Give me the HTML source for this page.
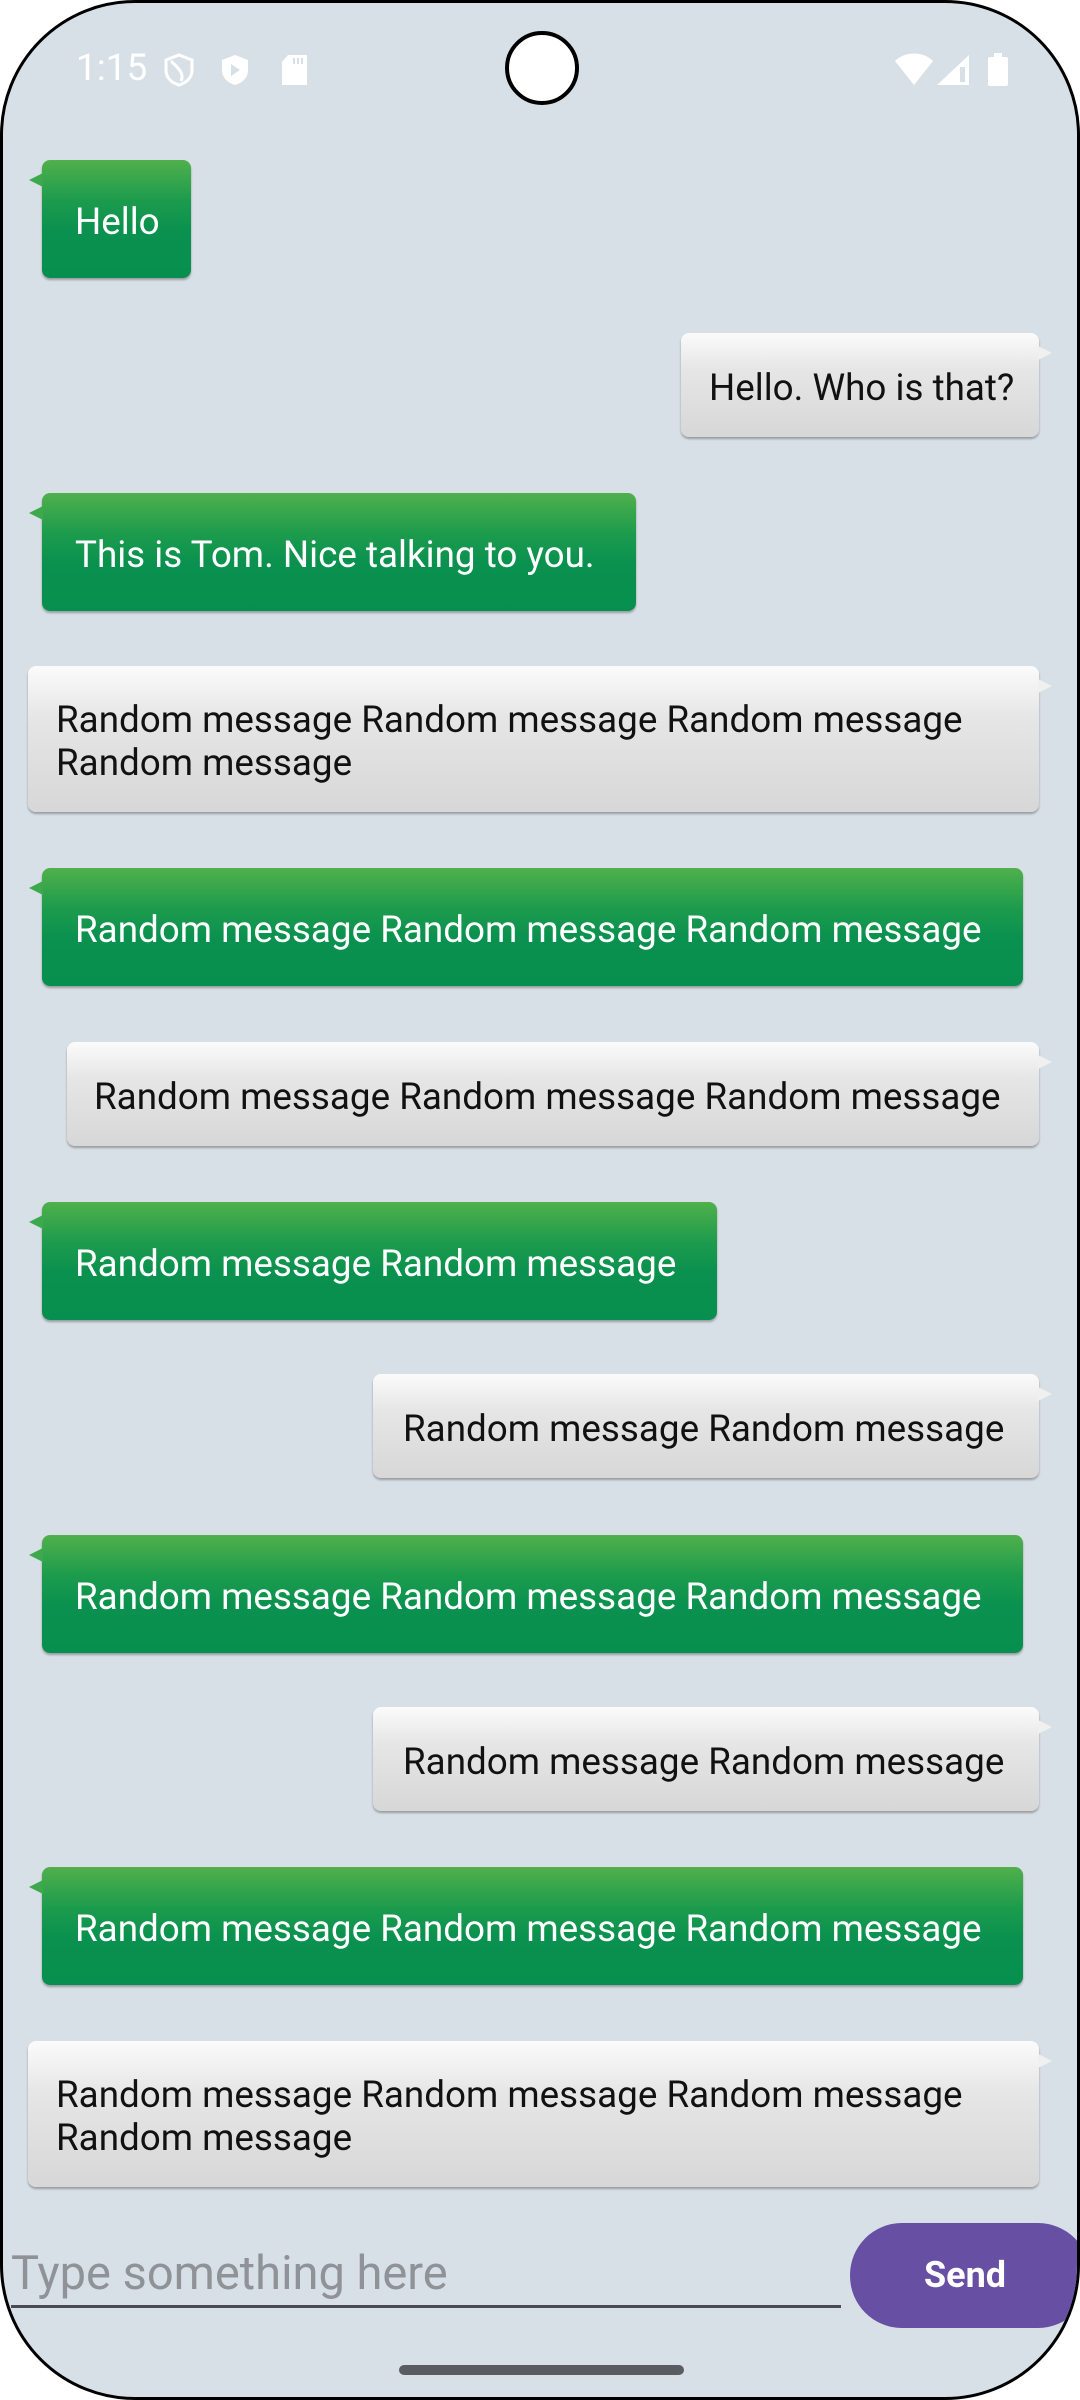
<!DOCTYPE html>
<html><head><meta charset="utf-8"><style>
*{margin:0;padding:0;box-sizing:border-box}
html,body{width:1080px;height:2400px;background:#fff;overflow:hidden}
#f{position:absolute;left:0;top:0;width:1080px;height:2400px;background:#d8e0e7;border:3px solid #000;border-radius:135px;overflow:hidden}
.b{position:absolute;font-family:"Roboto","Liberation Sans",sans-serif;font-size:36.8px;line-height:43px;display:flex;align-items:center;border-radius:8px;padding-top:4px}
.g{background:linear-gradient(#50b04c 0%,#1c9b4d 35%,#0a914f 60%,#078f4f 100%);color:#fff;padding-left:33px;box-shadow:0 2px 2px rgba(0,0,0,.3)}
.g:before{content:"";position:absolute;left:-13px;top:13px;border-right:14px solid #3ea84d;border-top:7px solid transparent;border-bottom:7px solid transparent}
.y{background:linear-gradient(#fbfbfb 0%,#e6e6e6 35%,#d7d7d7 100%);color:#111;padding-left:28px;box-shadow:0 2px 2px rgba(0,0,0,.3)}
.y:after{content:"";position:absolute;right:-13px;top:13px;border-left:14px solid #f0f0f0;border-top:7px solid transparent;border-bottom:7px solid transparent}
.st{position:absolute;color:#fff;font-family:"Roboto","Liberation Sans",sans-serif}
</style></head><body><div id="f">
<div class="st" style="left:73px;top:44px;font-size:37px">1:15</div>
<svg class="st" style="left:160px;top:50px" width="32" height="34" viewBox="0 0 32 34"><path d="M16 2 L29 7 V17 C29 25 23 30 16 32 C9 30 3 25 3 17 V7 Z" fill="none" stroke="#fff" stroke-width="3"/><path d="M8 8 C14 14 22 20 18 28" fill="none" stroke="#fff" stroke-width="3"/></svg>
<svg class="st" style="left:216px;top:50px" width="32" height="34" viewBox="0 0 32 34"><path d="M16 2 L29 7 V17 C29 25 23 30 16 32 C9 30 3 25 3 17 V7 Z" fill="#fff"/><path d="M12 11 L21 17 L12 23 Z" fill="#d8e0e7"/></svg>
<svg class="st" style="left:277px;top:51px" width="30" height="32" viewBox="0 0 30 32"><path d="M8 1 H27 V31 H2 V8 Z" fill="#fff"/><rect x="13" y="4" width="2" height="6" fill="#d8e0e7"/><rect x="17" y="4" width="2" height="6" fill="#d8e0e7"/><rect x="21" y="4" width="2" height="6" fill="#d8e0e7"/></svg>
<svg class="st" style="left:890px;top:48px" width="120" height="36" viewBox="0 0 120 36"><path d="M2 10 C12 0 30 0 40 10 L21 34 Z" fill="#fff"/><path d="M44 34 L76 4 V34 Z" fill="#fff"/><rect x="67" y="16" width="5" height="15" fill="#d8e0e7"/><rect x="95" y="6" width="20" height="29" rx="2" fill="#fff"/><rect x="101" y="2" width="8" height="5" fill="#fff"/></svg>
<div style="position:absolute;left:502px;top:28px;width:74px;height:74px;border-radius:50%;background:#fff;border:4px solid #000"></div>

<div class="b g" style="left:39px;top:157px;width:149px;height:118px">Hello</div>
<div class="b y" style="left:678px;top:330px;width:358px;height:104px">Hello. Who is that?</div>
<div class="b g" style="left:39px;top:490px;width:594px;height:118px">This is Tom. Nice talking to you.</div>
<div class="b y" style="left:25px;top:663px;width:1011px;height:146px">Random message Random message Random message<br>Random message</div>
<div class="b g" style="left:39px;top:865px;width:981px;height:118px">Random message Random message Random message</div>
<div class="b y" style="left:64px;top:1039px;width:972px;height:104px;padding-left:27px">Random message Random message Random message</div>
<div class="b g" style="left:39px;top:1199px;width:675px;height:118px">Random message Random message</div>
<div class="b y" style="left:370px;top:1371px;width:666px;height:104px;padding-left:30px">Random message Random message</div>
<div class="b g" style="left:39px;top:1532px;width:981px;height:118px">Random message Random message Random message</div>
<div class="b y" style="left:370px;top:1704px;width:666px;height:104px;padding-left:30px">Random message Random message</div>
<div class="b g" style="left:39px;top:1864px;width:981px;height:118px">Random message Random message Random message</div>
<div class="b y" style="left:25px;top:2038px;width:1011px;height:146px">Random message Random message Random message<br>Random message</div>

<div style="position:absolute;left:8px;top:2243px;font-family:'Roboto','Liberation Sans',sans-serif;font-size:47px;color:#8f9297">Type something here</div>
<div style="position:absolute;left:8px;top:2302px;width:830px;height:3px;background:#4a4a52"></div>
<div style="position:absolute;left:847px;top:2220px;width:240px;height:105px;border-radius:52px;background:#6750a4;color:#fff;font-family:'Roboto','Liberation Sans',sans-serif;font-weight:bold;font-size:36px;line-height:105px;padding-left:74px">Send</div>
<div style="position:absolute;left:396px;top:2362px;width:285px;height:10px;border-radius:5px;background:#595c60"></div>
</div></body></html>
